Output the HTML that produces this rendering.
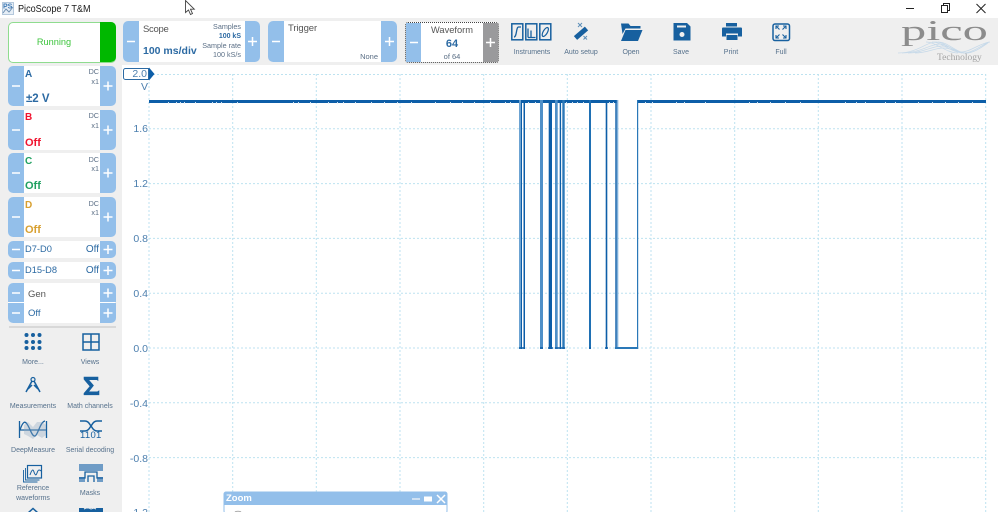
<!DOCTYPE html>
<html><head><meta charset="utf-8"><title>PicoScope 7 T&amp;M</title>
<style>
html,body{margin:0;padding:0;background:#fff}
#r{position:relative;width:998px;height:512px;overflow:hidden;background:#fff;font-family:"Liberation Sans",sans-serif}
#r div{position:absolute;box-sizing:border-box}
.t{white-space:nowrap;line-height:1}
.m,.p{background:#93bfea;color:#fff;text-align:center}
.w{background:#fff}
.s{font-size:7.2px;color:#5b6f86;text-align:right;white-space:nowrap;line-height:1}
.l{font-size:7px;color:#56718c;text-align:center;white-space:nowrap;line-height:9.5px}
.y{font-size:10.5px;color:#4c7fae;text-align:right;width:25px;left:123px;line-height:1}
svg{position:absolute;left:0;top:0}
</style></head><body><div id="r">
<div style="left:0;top:18px;width:998px;height:47px;background:#efefef"></div>
<div style="left:0;top:18px;width:122px;height:494px;background:#efefef"></div>

<div class="t" style="left:18px;top:4px;font-size:10.5px;color:#1a1a1a;transform:scaleX(.865);transform-origin:left top">PicoScope 7 T&amp;M</div>

<div style="left:8px;top:22px;width:108px;height:41px;background:#fff;border:1px solid #8fdc8f;border-radius:5px"></div>
<div style="left:100px;top:22px;width:16px;height:40px;background:#00b800;border-radius:0 5px 5px 0"></div>
<div class="t" style="left:0;width:108px;top:38px;font-size:9.2px;color:#3cc43c;text-align:center">Running</div>

<!-- scope -->
<div class="w" style="left:123px;top:21px;width:137px;height:41px;border-radius:5px"></div>
<div class="m" style="left:123px;top:21px;width:16px;height:41px;border-radius:5px 0 0 5px"></div>
<div class="p" style="left:245px;top:21px;width:15px;height:41px;border-radius:0 5px 5px 0"></div>
<div class="t" style="left:143px;top:25px;font-size:9.5px;letter-spacing:-.3px;color:#555">Scope</div>
<div class="t" style="left:143px;top:46px;font-size:10.5px;font-weight:bold;color:#2c6aa3">100 ms/div</div>
<div class="s" style="right:757px;top:23px">Samples</div>
<div class="s" style="right:757px;top:33px;font-weight:bold;color:#2c6aa3;font-size:7px">100 kS</div>
<div class="s" style="right:757px;top:42px">Sample rate</div>
<div class="s" style="right:757px;top:51px">100 kS/s</div>

<!-- trigger -->
<div class="w" style="left:268px;top:21px;width:129px;height:41px;border-radius:5px"></div>
<div class="m" style="left:268px;top:21px;width:16px;height:41px;border-radius:5px 0 0 5px"></div>
<div class="p" style="left:381px;top:21px;width:16px;height:41px;border-radius:0 5px 5px 0"></div>
<div class="t" style="left:288px;top:24px;font-size:9.5px;letter-spacing:-.1px;color:#555">Trigger</div>
<div class="s" style="right:620px;top:53px;font-size:7.5px">None</div>

<!-- waveform -->
<div class="w" style="left:405px;top:22px;width:94px;height:41px;border:1px dotted #444;border-radius:3px"></div>
<div class="m" style="left:406px;top:23px;width:15px;height:39px"></div>
<div class="p" style="left:483px;top:23px;width:15px;height:39px;background:#9a9a9c"></div>
<div class="t" style="left:421px;width:62px;top:26px;font-size:9.3px;color:#555;text-align:center">Waveform</div>
<div class="t" style="left:421px;width:62px;top:39px;font-size:11px;font-weight:bold;color:#2c6aa3;text-align:center">64</div>
<div class="t" style="left:421px;width:62px;top:53px;font-size:7.5px;color:#5b6f86;text-align:center">of 64</div>

<!-- channels -->
<div class="w" style="left:8px;top:66px;width:107px;height:40px;border-radius:5px"></div>
<div class="m" style="left:8px;top:66px;width:16px;height:40px;border-radius:5px 0 0 5px"></div>
<div class="p" style="left:100px;top:66px;width:16px;height:40px;border-radius:0 5px 5px 0"></div>
<div class="t" style="left:25px;top:70px;font-size:10px;font-weight:bold;color:#2c6aa3">A</div>
<div class="s" style="right:899px;top:68px">DC</div><div class="s" style="right:899px;top:78px">x1</div>
<div class="t" style="left:26px;top:94px;font-size:11.5px;font-weight:bold;color:#2c6aa3">±2 V</div>

<div class="w" style="left:8px;top:110px;width:107px;height:40px;border-radius:5px"></div>
<div class="m" style="left:8px;top:110px;width:16px;height:40px;border-radius:5px 0 0 5px"></div>
<div class="p" style="left:100px;top:110px;width:16px;height:40px;border-radius:0 5px 5px 0"></div>
<div class="t" style="left:25px;top:113px;font-size:10px;font-weight:bold;color:#f0132f">B</div>
<div class="s" style="right:899px;top:112px">DC</div><div class="s" style="right:899px;top:122px">x1</div>
<div class="t" style="left:25px;top:138px;font-size:11px;font-weight:bold;color:#f0132f">Off</div>

<div class="w" style="left:8px;top:153px;width:107px;height:40px;border-radius:5px"></div>
<div class="m" style="left:8px;top:153px;width:16px;height:40px;border-radius:5px 0 0 5px"></div>
<div class="p" style="left:100px;top:153px;width:16px;height:40px;border-radius:0 5px 5px 0"></div>
<div class="t" style="left:25px;top:157px;font-size:10px;font-weight:bold;color:#1fa060">C</div>
<div class="s" style="right:899px;top:156px">DC</div><div class="s" style="right:899px;top:165px">x1</div>
<div class="t" style="left:25px;top:181px;font-size:11px;font-weight:bold;color:#1fa060">Off</div>

<div class="w" style="left:8px;top:197px;width:107px;height:40px;border-radius:5px"></div>
<div class="m" style="left:8px;top:197px;width:16px;height:40px;border-radius:5px 0 0 5px"></div>
<div class="p" style="left:100px;top:197px;width:16px;height:40px;border-radius:0 5px 5px 0"></div>
<div class="t" style="left:25px;top:201px;font-size:10px;font-weight:bold;color:#d8a030">D</div>
<div class="s" style="right:899px;top:200px">DC</div><div class="s" style="right:899px;top:209px">x1</div>
<div class="t" style="left:25px;top:225px;font-size:11px;font-weight:bold;color:#d8a030">Off</div>

<div class="w" style="left:8px;top:241px;width:107px;height:17px;border-radius:5px"></div>
<div class="m" style="left:8px;top:241px;width:16px;height:17px;border-radius:5px 0 0 5px"></div>
<div class="p" style="left:100px;top:241px;width:16px;height:17px;border-radius:0 5px 5px 0"></div>
<div class="t" style="left:25px;top:245px;font-size:9.3px;color:#2c6aa3">D7-D0</div>
<div class="t" style="right:899px;top:245px;font-size:10px;color:#2c6aa3">Off</div>

<div class="w" style="left:8px;top:262px;width:107px;height:17px;border-radius:5px"></div>
<div class="m" style="left:8px;top:262px;width:16px;height:17px;border-radius:5px 0 0 5px"></div>
<div class="p" style="left:100px;top:262px;width:16px;height:17px;border-radius:0 5px 5px 0"></div>
<div class="t" style="left:25px;top:266px;font-size:9.3px;color:#2c6aa3">D15-D8</div>
<div class="t" style="right:899px;top:266px;font-size:10px;color:#2c6aa3">Off</div>

<div class="w" style="left:8px;top:283px;width:107px;height:40px;border-radius:5px"></div>
<div class="m" style="left:8px;top:283px;width:16px;height:19px;border-radius:5px 0 0 0"></div>
<div class="m" style="left:8px;top:303px;width:16px;height:20px;border-radius:0 0 0 5px"></div>
<div class="p" style="left:100px;top:283px;width:16px;height:19px;border-radius:0 5px 0 0"></div>
<div class="p" style="left:100px;top:303px;width:16px;height:20px;border-radius:0 0 5px 0"></div>
<div class="t" style="left:28px;top:290px;font-size:9.5px;color:#555">Gen</div>
<div class="t" style="left:28px;top:309px;font-size:9.5px;color:#2c6aa3">Off</div>
<div style="left:9px;top:326px;width:107px;height:2px;background:#d8d8d8"></div>

<svg width="998" height="512" viewBox="0 0 998 512">
<!-- +/- glyphs -->
<g stroke="#fff" stroke-width="1.500" fill="none">
<path d="M127 41.500h8M272 41.500h8M410 42.500h8M12 86h8M12 130h8M12 173h8M12 217h8M12 249.500h8M12 270.500h8M12 293h8M12 313h8"/>
<path d="M248 41.500h9M252.500 37v9M385 41.500h9M389.500 37v9M486 42.500h9M490.500 38v9M103.500 86h9M108 81.500v9M103.500 130h9M108 125.500v9M103.500 173h9M108 168.500v9M103.500 217h9M108 212.500v9M103.500 249.500h9M108 245v9M103.500 270.500h9M108 266v9M103.500 293h9M108 288.500v9M103.500 313h9M108 308.500v9"/>
</g>
<!-- title icon -->
<rect x="2.500" y="2.500" width="11" height="12" fill="#e6eef6" stroke="#b4c8dc"/>
<path d="M3 13l3-4 3 3 4-5" stroke="#6f90b2" fill="none"/>
<text x="3" y="8.500" font-family="Liberation Sans,sans-serif" font-size="7" font-weight="bold" fill="#3d78b4">PS</text>
<!-- cursor -->
<path d="M185.500 .5v12l3-2.500 2 4.500 2-1-2-4.300h3.800z" fill="#fff" stroke="#444" stroke-width=".9"/>
<!-- window controls -->
<path d="M906 8.500h8" stroke="#222" fill="none"/>
<path d="M941.500 5.500h6v7h-6zM943.500 5.500v-2h6v7h-2" stroke="#222" fill="none"/>
<path d="M976.500 4l9 9M985.500 4l-9 9" stroke="#222" fill="none"/>

<!-- grid -->
<g stroke="#bde2f0" stroke-width="1" stroke-dasharray="2 2" fill="none">
<path d="M149 74v438M232.700 74v438M316.300 74v438M400 74v438M483.700 74v438M567.300 74v438M651 74v438M734.700 74v438M818.300 74v438M902 74v438M985.700 74v438"/>
<path d="M149 74.500h837M149 128.800h837M149 183.600h837M149 238.400h837M149 293.200h837M149 348h837M149 402.800h837M149 457.600h837"/>
</g>
<!-- signal -->
<rect x="149" y="100" width="369" height="3" fill="#0d5ea8"/>
<rect x="518" y="100" width="100" height="3" fill="#0d5ea8"/>
<rect x="637" y="100" width="349" height="3" fill="#0d5ea8"/>
<g fill="#0d5ea8">
<rect x="519" y="100" width="3" height="249" fill="#6ca3d2"/><rect x="521" y="100" width="1" height="249"/>
<rect x="523.500" y="100" width="1.500" height="249"/>
<rect x="540" y="100" width="3" height="249" fill="#4f90c8"/>
<rect x="548.700" y="100" width="3.300" height="249"/>
<rect x="555" y="100" width="2.700" height="249" fill="#4f90c8"/>
<rect x="559.700" y="100" width="1.400" height="249"/>
<rect x="562.300" y="100" width="2.400" height="249" fill="#2a78b8"/>
<rect x="589" y="100" width="2" height="249" fill="#1f70b4"/>
<rect x="605.700" y="100" width="1.600" height="249"/>
<rect x="615.300" y="100" width="1.500" height="249"/><rect x="616.800" y="100" width="1.500" height="249" fill="#7fb0da"/>
<rect x="637" y="100" width="1.200" height="249" fill="#2a78b8"/>
<rect x="615" y="347" width="23" height="2" fill="#2a78b8"/>
<path d="M519 348h6M540 348h3M548 348h5M555 348h10M589 348h2M605 348h3" stroke="#0d5ea8" stroke-width="1.500"/>
</g>
<g stroke="#cfe1f0" stroke-width="1" fill="none">
<path d="M168.500 102v1.500M176.500 102v1.500M180.500 102v1.500M184.500 102v1.500M195.500 102v1.500M212.500 102v1.500M216.500 102v1.500M221.500 102v1.500M237.500 102v1.500M293.500 102v1.500M298.500 102v1.500M310.500 102v1.500M328.500 102v1.500M337.500 102v1.500M343.500 102v1.500M355.500 102v1.500M371.500 102v1.500M384.500 102v1.500M397.500 102v1.500M411.500 102v1.500M435.500 102v1.500M450.500 102v1.500M462.500 102v1.500M474.500 102v1.500M490.500 102v1.500M505.500 102v1.500M510.500 102v1.500M528.500 102v1.500M535.500 102v1.500M566.500 102v1.500M572.500 102v1.500M577.500 102v1.500M583.500 102v1.500M609.500 102v1.500M613.500 102v1.500M645.500 102v1.500M652.500 102v1.500M676.500 102v1.500M684.500 102v1.500M705.500 102v1.500M749.500 102v1.500M757.500 102v1.500M770.500 102v1.500M785.500 102v1.500M800.500 102v1.500M845.500 102v1.500M856.500 102v1.500M865.500 102v1.500M885.500 102v1.500M895.500 102v1.500M918.500 102v1.500M932.500 102v1.500M945.500 102v1.500M958.500 102v1.500M972.500 102v1.500"/>
</g>
<!-- 2.0 marker -->
<path d="M125.500 68.500h23v11h-23a2 2 0 0 1-2-2v-7a2 2 0 0 1 2-2z" fill="#fff" stroke="#2c6aa3"/>
<path d="M149 67.500l5.500 6.500-5.500 6.500z" fill="#0d5ea8"/>

<!-- top toolbar icons -->
<g fill="none" stroke="#17609f" stroke-width="1.500">
<rect x="511.800" y="23.800" width="11" height="16"/><rect x="525.800" y="23.800" width="11" height="16"/><rect x="539.800" y="23.800" width="11" height="16"/>
<path d="M514 37c3 0 2-10 4.500-10 .8 0 1.200 0 2.500 0" stroke-width="1.300"/>
<path d="M528 37.500v-9M531 37.500v-7M534 37.500h1.500M528 37.500h7" stroke-width="1.300"/>
<ellipse cx="545.300" cy="32" rx="2.100" ry="5" transform="rotate(30 545.300 32)" stroke-width="1.200"/>
</g>
<path d="M575.500 38l11-9.500" stroke="#17609f" stroke-width="5" fill="none"/>
<path d="M578 23l4 4M582 23l-4 4M583.500 36l3.500 3.500M587 36l-3.500 3.500" stroke="#5d8fb9" fill="none"/>
<path d="M621 23.500h7.500l2 2.500h10v2.500h-15l-3 5.500z" fill="#17609f"/>
<path d="M621 41l4.500-11h17l-4.500 11z M621 28v13" fill="#17609f"/>
<path d="M673.500 23h13.500l3.500 3.500v14h-17z" fill="#17609f"/>
<rect x="677" y="25.500" width="9" height="2" fill="#efefef"/>
<circle cx="682" cy="34.500" r="2.500" fill="#efefef"/>
<rect x="726" y="23" width="11" height="3.500" fill="#17609f"/>
<path d="M723 27.500h18a1 1 0 0 1 1 1v8h-4v-3h-12v3h-4v-8a1 1 0 0 1 1-1z" fill="#17609f"/>
<rect x="726.500" y="35" width="11" height="5" fill="#17609f"/>
<rect x="773" y="24" width="16.500" height="16.500" rx="2" fill="none" stroke="#17609f" stroke-width="1.500"/>
<path d="M776 29v-3h3M786 29v-3h-3M776 35v3h3M786 35v3h-3M776.500 26.500l3 3M785.500 26.500l-3 3M776.500 37.500l3-3M785.500 37.500l-3-3" stroke="#17609f" fill="none" stroke-width="1.100"/>

<!-- logo waves -->
<g fill="none" stroke="#c6d9e9" stroke-width=".7">
<path d="M898 53c20 0 28-11 38-11 10 0 16 10 26 10 8 0 18-9 28-10"/>
<path d="M902 53c18 0 28-9 38-9 8 0 16 9 24 9 8 0 18-8 25-11"/>
<path d="M908 53c14 0 24-7 34-7 10 0 14 7 24 7 8 0 16-6 22-10"/>
<path d="M915 53c12 0 20-5 28-5 10 0 14 5 24 5 6 0 14-5 19-9"/>
<path d="M926 42c10 0 20 11 32 11M932 42c10 0 18 10 30 11M938 42c10 0 16 9 26 11"/>
</g>

<!-- sidebar icons -->
<g fill="#17609f">
<circle cx="26.500" cy="335" r="2"/><circle cx="33" cy="335" r="2"/><circle cx="39.500" cy="335" r="2"/>
<circle cx="26.500" cy="342" r="2"/><circle cx="33" cy="342" r="2"/><circle cx="39.500" cy="342" r="2"/>
<circle cx="26.500" cy="348" r="2"/><circle cx="33" cy="348" r="2"/><circle cx="39.500" cy="348" r="2"/>
</g>
<g fill="none" stroke="#17609f" stroke-width="1.500">
<rect x="83" y="334" width="16" height="16"/><path d="M91 334v16M83 342h16"/>
<circle cx="33" cy="379.500" r="2" stroke-width="1.200"/>
<path d="M32 381l-6 11M34 381l6 11M28 389l4-4M38 389l-4-4"/>
<path d="M19.500 421v17M46.500 421v17M19.500 430h27" stroke-width="1.300"/>
<path d="M20 430c3-9 5-9 7-6 3 4 5 13 8 12 3-1 5-14 10-15" stroke-width="1.300"/>
<path d="M80 421h5c4 0 5 4 6 5s2 5 6 5h5M80 431h5c4 0 5-4 6-5s2-5 6-5h5" stroke-width="1.500"/>
<rect x="27.500" y="465.500" width="14" height="12.500" stroke-width="1.200"/>
<path d="M25.500 468v12h14M23.500 470v12h14" stroke-width=".9"/>
<path d="M30 475c2-6 3-6 4-3s2 4 3 1 2-4 4-2" stroke-width="1"/>
<path d="M28 513l5-4.500 5 4.500" stroke-width="1.500"/>
</g>
<path d="M84 377h14v3.500l-1-.8h-8.500l5 5.800-5 6.300h9l1.500-1v4h-15v-1.500l6-7-6-7z" fill="#17609f" stroke="#17609f" stroke-width=".6"/>
<path d="M24 425l4-3 5 5 4-5 5 0 4 3v10l-4 3-5-3-4 4-5-3-4-2z" fill="#8fa9c2" opacity=".35"/>
<g fill="#6f9cc6"><rect x="79" y="464" width="24" height="7"/><rect x="79" y="477" width="6" height="5"/><rect x="97" y="477" width="6" height="5"/></g>
<path d="M79 475h5v-3h14v3h5" stroke="#efefef" fill="none"/>
<path d="M79 478h6v-6h12v6h6M88 482v-6h6v6" stroke="#17609f" stroke-width="1.300" fill="none"/>
<path d="M79 512v-4h24v4z" fill="#17609f"/>
<path d="M84 509l2-1h3l2 1 3-1 2 1" stroke="#efefef" fill="none"/>

<!-- zoom window -->
<rect x="224" y="492" width="223" height="21" rx="2" fill="#fff" stroke="#93bfea"/>
<path d="M224 505v-11a2 2 0 0 1 2-2h219a2 2 0 0 1 2 2v11z" fill="#93bfea"/>
<path d="M412 499h8" stroke="#cfe1f3" stroke-width="2"/>
<rect x="424" y="496.500" width="8" height="5" fill="#fff"/>
<path d="M437 495l8 8M445 495l-8 8" stroke="#fff" stroke-width="1.500"/>
<path d="M235 512c1-1 5-1 6 0" stroke="#aaa" fill="none"/>
</svg>

<div class="t" style="left:226px;top:494px;font-size:9.5px;font-weight:bold;color:#fff">Zoom</div>

<!-- axis labels -->
<div class="y t" style="top:69px;width:24px">2.0</div>
<div class="y t" style="top:82px">V</div>
<div class="y t" style="top:124px">1.6</div>
<div class="y t" style="top:179px">1.2</div>
<div class="y t" style="top:234px">0.8</div>
<div class="y t" style="top:289px">0.4</div>
<div class="y t" style="top:344px">0.0</div>
<div class="y t" style="top:399px">-0.4</div>
<div class="y t" style="top:454px">-0.8</div>
<div class="y t" style="top:508px">-1.2</div>

<!-- toolbar labels -->
<div class="l" style="left:502px;width:60px;top:48px">Instruments</div>
<div class="l" style="left:551px;width:60px;top:48px">Auto setup</div>
<div class="l" style="left:601px;width:60px;top:48px">Open</div>
<div class="l" style="left:651px;width:60px;top:48px">Save</div>
<div class="l" style="left:701px;width:60px;top:48px">Print</div>
<div class="l" style="left:751px;width:60px;top:48px">Full</div>

<!-- sidebar labels -->
<div class="l" style="left:3px;width:60px;top:358px">More...</div>
<div class="l" style="left:60px;width:60px;top:358px">Views</div>
<div class="l" style="left:3px;width:60px;top:402px">Measurements</div>
<div class="l" style="left:60px;width:60px;top:402px">Math channels</div>
<div class="l" style="left:3px;width:60px;top:446px">DeepMeasure</div>
<div class="l" style="left:60px;width:60px;top:446px">Serial decoding</div>
<div class="l" style="left:3px;width:60px;top:484px">Reference<br>waveforms</div>
<div class="l" style="left:60px;width:60px;top:489px">Masks</div>
<div class="t" style="left:80px;top:431px;font-size:9.5px;color:#17609f;letter-spacing:.3px">1101</div>

<!-- logo -->
<div class="t" style="left:901px;top:17px;font-family:'Liberation Serif',serif;font-size:29px;color:#8c8c8c;transform:scaleX(1.74);transform-origin:left top">pico</div>
<div class="t" style="left:937px;top:54px;font-family:'Liberation Serif',serif;font-size:9.5px;color:#a3a3a3">Technology</div>
</div></body></html>
